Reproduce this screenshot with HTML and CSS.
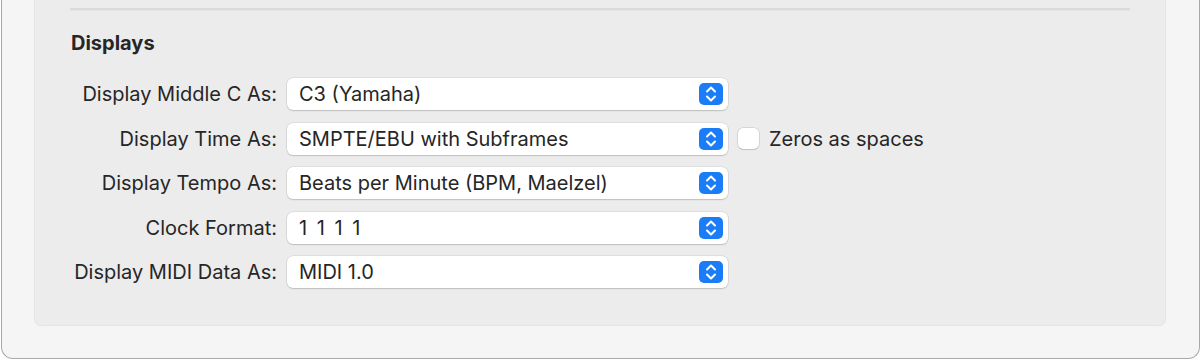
FILE: index.html
```html
<!DOCTYPE html>
<html lang="en">
<head>
    <meta charset="UTF-8">
    <title>Display Settings</title>
    <link rel="stylesheet" href="styles.css">
</head>
<body>
    <div class="window">
        <div class="panel">
            <div class="separator"></div>
            <h2 class="section-title">Displays</h2>

            <div class="form-grid">
                <label class="field-label">Display Middle C As:</label>
                <div class="popup"><span>C3 (Yamaha)</span><span class="stepper"></span></div>
                <div></div>

                <label class="field-label">Display Time As:</label>
                <div class="popup"><span>SMPTE/EBU with Subframes</span><span class="stepper"></span></div>
                <div class="check-row"><span class="checkbox"></span><span>Zeros as spaces</span></div>

                <label class="field-label">Display Tempo As:</label>
                <div class="popup"><span>Beats per Minute (BPM, Maelzel)</span><span class="stepper"></span></div>
                <div></div>

                <label class="field-label">Clock Format:</label>
                <div class="popup"><span class="clock">1 1 1 1</span><span class="stepper"></span></div>
                <div></div>

                <label class="field-label">Display MIDI Data As:</label>
                <div class="popup"><span>MIDI 1.0</span><span class="stepper"></span></div>
                <div></div>
            </div>
        </div>
    </div>
</body>
</html>
```

FILE: styles.css
```css
body {
    margin: 0;
    background: #ffffff;
    font-family: Inter, "Noto Sans", sans-serif;
    color: #262626;
    overflow: hidden;
}
.window {
    margin-left: 1px;
    width: 1199px;
    height: 359px;
    box-sizing: border-box;
    background: #f5f5f5;
    border: 1px solid #a8a8a8;
    border-top: none;
    border-radius: 0 0 12px 12px;
    padding: 0 33px 32px 32px;
}
.panel {
    height: 100%;
    box-sizing: border-box;
    background: #ececec;
    border: 1px solid #e4e4e4;
    border-top: none;
    border-radius: 0 0 7px 7px;
    padding: 8px 35px 0 35px;
}
.separator {
    height: 2px;
    background: #dadada;
    border-bottom: 1px solid #e6e6e6;
}
.section-title {
    margin: 20px 0 0 1px;
    font-size: 20px;
    font-weight: 700;
    line-height: 24px;
}
.form-grid {
    margin-top: 23px;
    display: grid;
    grid-template-columns: 207px 441px auto;
    column-gap: 10px;
    row-gap: 12.6px;
    align-items: center;
}
.field-label {
    text-align: right;
    font-size: 20px;
    line-height: 24px;
}
.popup {
    height: 32px;
    background: #ffffff;
    border-radius: 6px;
    box-shadow: 0 0 0 0.5px rgba(0, 0, 0, 0.12), 0 1px 1.5px rgba(0, 0, 0, 0.14);
    display: flex;
    align-items: center;
    justify-content: space-between;
    padding: 0 5px 0 12px;
    font-size: 20px;
}
.clock {
    word-spacing: 4px;
}
.stepper {
    width: 24px;
    height: 22px;
    border-radius: 5px;
    background: #1b7cf7;
    background-image: url("data:image/svg+xml,%3Csvg xmlns='http://www.w3.org/2000/svg' width='24' height='22'%3E%3Cpath d='M8 8.5 L12 4.5 L16 8.5 M8 13.5 L12 17.5 L16 13.5' fill='none' stroke='white' stroke-width='2' stroke-linecap='round' stroke-linejoin='round'/%3E%3C/svg%3E");
}
.check-row {
    display: flex;
    align-items: center;
    gap: 10px;
    font-size: 20px;
}
.checkbox {
    width: 21px;
    height: 21px;
    background: #ffffff;
    border-radius: 5px;
    box-shadow: 0 0 0 0.5px rgba(0, 0, 0, 0.18), 0 1px 1px rgba(0, 0, 0, 0.1);
}
```
